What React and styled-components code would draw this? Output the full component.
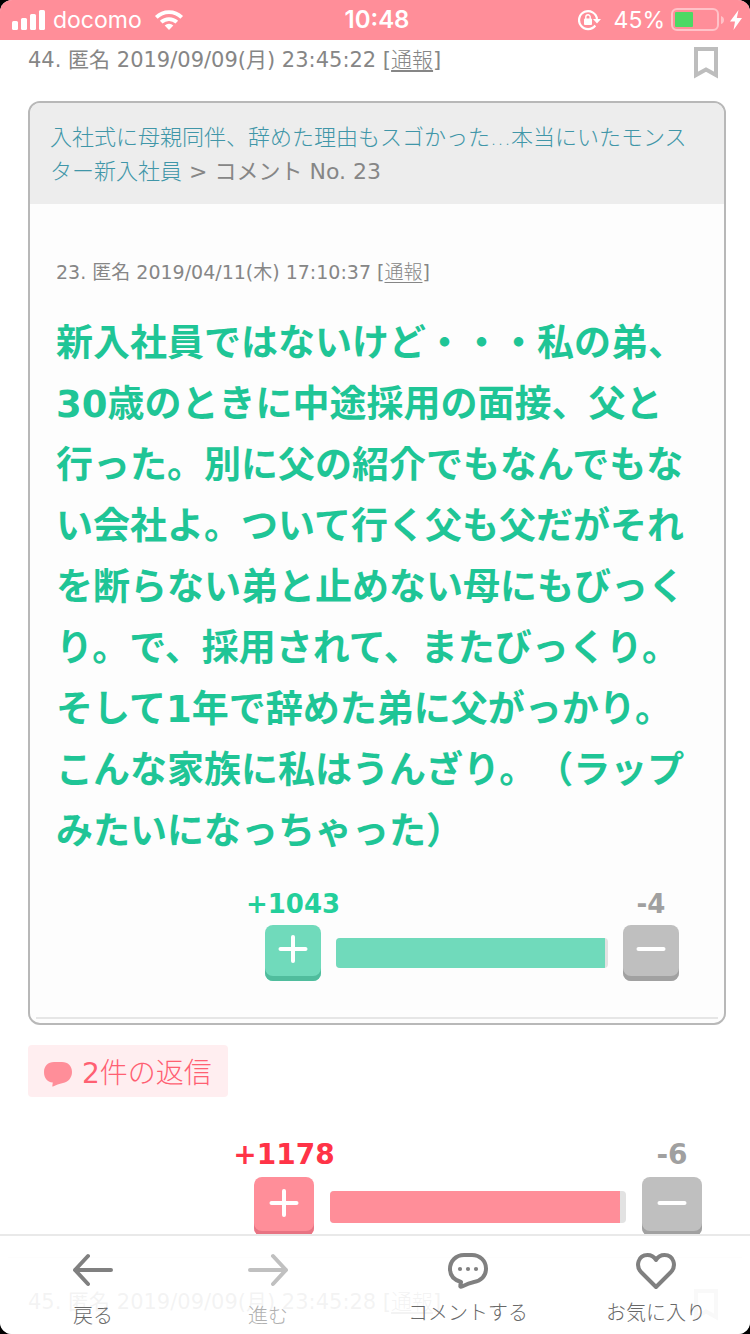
import styled, { createGlobalStyle } from 'styled-components';

const GlobalStyle = createGlobalStyle`
    * {
        box-sizing: border-box;
    }

    body {
        margin: 0;
        background: #000;
        font-family: 'DejaVu Sans', 'Noto Sans CJK JP', sans-serif;
        color: #868686;
    }

    button {
        border: none;
        padding: 0;
        font-family: inherit;
        cursor: pointer;
    }
`;

const Screen = styled.div`
    position: relative;
    height: 100vh;
    display: flex;
    flex-direction: column;
    overflow: hidden;
    border-radius: 12px;
    background: #fff;
`;

const StatusBar = styled.header`
    flex: none;
    height: 40px;
    padding: 0 8px 0 12px;
    display: grid;
    grid-template-columns: 1fr auto 1fr;
    align-items: center;
    background: #ff8e99;
    color: #fff;
    font-family: 'Inter', sans-serif;
    font-size: 23px;
    line-height: 40px;
`;

const StatusGroup = styled.div`
    display: flex;
    align-items: center;
    justify-content: ${props => props.justify};
    gap: ${props => props.gap};
`;

const Clock = styled.time`
    font-size: 24px;
    font-weight: 600;
`;

const Feed = styled.main`
    flex: 1;
    min-height: 0;
    overflow-y: auto;
    scrollbar-width: none;
    padding: 0 8px;
`;

const Post = styled.article`
    padding: 24px 16px 21px 20px;
    border-top: 1px solid #e6e6e6;

    &:first-child {
        padding-top: 0;
        border-top: none;
    }
`;

const PostHead = styled.div`
    display: flex;
    justify-content: space-between;
    align-items: flex-start;
    padding-right: 8px;
`;

const Meta = styled.p`
    margin: 0;
    font-size: ${props => props.$small ? '19px' : '21px'};
    line-height: ${props => props.$small ? '28px' : '40px'};
`;

const Report = styled.a`
    color: inherit;
    font-weight: 300;
    text-decoration: underline;
    text-underline-offset: 3px;
`;

const BookmarkButton = styled.button`
    display: flex;
    margin-top: 7px;
    background: none;
`;

const Quote = styled.section`
    margin-top: 21px;
    border: 2px solid #b8b8b8;
    border-radius: 12px;
    overflow: hidden;
    background: #fdfdfd;
`;

const QuoteHead = styled.p`
    margin: 0;
    padding: 18px 20px 15px;
    background: #ededed;
    font-size: 22px;
    line-height: 34px;
`;

const TopicLink = styled.a`
    color: #4096a8;
    font-weight: 300;
    text-decoration: none;
`;

const QuoteBody = styled.div`
    padding: 54px 26px 36px;
`;

const Comment = styled.p`
    margin: 27px 0 28px;
    color: #1fc596;
    font-size: 37px;
    font-weight: 700;
    line-height: 61px;
    text-spacing-trim: space-all;
`;

const QuoteRule = styled.hr`
    margin: 0 6px 4px;
    border: none;
    border-top: 2px solid #e6e6e6;
`;

const ReplyButton = styled.button`
    display: flex;
    align-items: center;
    gap: 8px;
    height: 52px;
    margin-top: 20px;
    padding: 6px 16px 0;
    border-radius: 4px;
    background: #ffeef0;
    color: #ff6072;
    font-size: 28px;
    font-weight: 300;
    line-height: 46px;
`;

const ReplyCount = styled.span`
    font-weight: 400;
`;

const Votes = styled.div`
    display: grid;
    grid-template-columns: ${props => props.$small ? '56px 1fr 56px' : '60px 1fr 60px'};
    gap: ${props => props.$small ? '7px 15px' : '6px 16px'};
    align-items: center;
    max-width: ${props => props.$small ? '414px' : '448px'};
    margin: ${props => props.$small ? '0 19px 0 auto' : '42px 24px 0 auto'};
    font-size: ${props => props.$small ? '26px' : '28px'};
    line-height: ${props => props.$small ? '28px' : '32px'};
`;

const Count = styled.span`
    grid-column: ${props => props.col};
    display: flex;
    justify-content: center;
    color: ${props => props.color};
    font-weight: 700;
    white-space: nowrap;
`;

const VoteButton = styled.button`
    display: flex;
    justify-content: center;
    align-items: center;
    height: ${props => props.$small ? '56px' : '59px'};
    padding-bottom: 6px;
    border-radius: 8px;
    background: ${props => props.$face};
    box-shadow: inset 0 -5px 0 ${props => props.$edge};
`;

const Track = styled.div`
    height: ${props => props.$small ? '30px' : '32px'};
    border-radius: 4px;
    overflow: hidden;
    background: #e2e2e2;
`;

const Fill = styled.div`
    height: 100%;
    background: ${props => props.color};
`;

const TabBar = styled.nav`
    position: absolute;
    left: 0;
    right: 0;
    bottom: 0;
    height: 100px;
    padding-right: 24px;
    display: grid;
    grid-template-columns: 186fr 164fr 236fr 140fr;
    border-top: 2px solid #e9e9e9;
    background: rgba(255, 255, 255, 0.9);
`;

const Tab = styled.button`
    display: flex;
    flex-direction: column;
    align-items: center;
    gap: ${props => props.gap};
    padding-top: 14px;
    background: none;
    color: ${props => props.disabled ? '#b0b0b0' : '#686868'};
    font-size: 20px;
    font-weight: 300;
    line-height: 24px;
    white-space: nowrap;

    svg {
        color: ${props => props.disabled ? '#c0c0c0' : '#808080'};
    }
`;

const themes = {
    pink: { text: '#ff3347', face: '#ff8e99', edge: '#e87483' },
    green: { text: '#24cf9b', face: '#70dabb', edge: '#50bd9d' },
};

function Sign({plus}) {
    return (
        <svg width="30" height="30" viewBox="0 0 30 30" stroke="#fff" strokeWidth="4" strokeLinecap="round" aria-hidden="true">
            <path d="M2.500 14h25" />
            {plus && <path d="M15 2v24" />}
        </svg>
    );
}

function VoteRow({up, down, percent, theme, small}) {
    const colors = themes[theme];

    return (
        <Votes $small={small}>
            <Count col={1} color={colors.text}>+{up}</Count>
            <Count col={3} color="#a0a0a0">-{down}</Count>
            <VoteButton $small={small} $face={colors.face} $edge={colors.edge} aria-label="プラス">
                <Sign plus />
            </VoteButton>
            <Track $small={small}>
                <Fill color={colors.face} style={{width: `${percent}%`}} />
            </Track>
            <VoteButton $small={small} $face="#bfbfbf" $edge="#a1a1a1" aria-label="マイナス">
                <Sign />
            </VoteButton>
        </Votes>
    );
}

function PostMeta({number, date, small}) {
    return (
        <Meta $small={small}>
            {number}. 匿名 {date} [<Report href="#report">通報</Report>]
        </Meta>
    );
}

function PostHeader({number, date}) {
    return (
        <PostHead>
            <PostMeta number={number} date={date} />
            <BookmarkButton aria-label="ブックマーク">
                <svg width="24" height="32" viewBox="0 0 24 32" fill="none" stroke="#bdbdbd" strokeWidth="4">
                    <path d="M2 2h20v26l-10-5.500-10 5.500z" />
                </svg>
            </BookmarkButton>
        </PostHead>
    );
}

function Status() {
    return (
        <StatusBar>
            <StatusGroup justify="flex-start" gap="8px">
                <svg width="33" height="20" viewBox="0 0 33 20" fill="#fff">
                    <rect x="0" y="11" width="6" height="9" rx="1.500" />
                    <rect x="9" y="8" width="6" height="12" rx="1.500" />
                    <rect x="18" y="4" width="6" height="16" rx="1.500" />
                    <rect x="27" y="0" width="6" height="20" rx="1.500" />
                </svg>
                <span>docomo</span>
                <svg width="36" height="20" viewBox="-5 0 36 20">
                    <g fill="none" stroke="#fff" strokeWidth="3.800">
                        <path d="M1.300 7.300a18 18 0 0 1 25.400 0" />
                        <path d="M6.200 12.200a11.200 11.200 0 0 1 15.600 0" />
                    </g>
                    <path d="M14 20l-4.300-4.500a6.200 6.200 0 0 1 8.600 0z" fill="#fff" />
                </svg>
            </StatusGroup>
            <Clock>10:48</Clock>
            <StatusGroup justify="flex-end" gap="6px">
                <svg width="30" height="22" viewBox="0 0 30 22">
                    <path d="M17.300 16.500A9 9 0 1 1 19 10" fill="none" stroke="#fff" strokeWidth="2.200" />
                    <path d="M15 10h8l-4 4.500z" fill="#fff" />
                    <rect x="6" y="9.500" width="8" height="6.500" rx="1" fill="#fff" />
                    <path d="M7.800 10V8a2.200 2.200 0 0 1 4.400 0v2" fill="none" stroke="#fff" strokeWidth="1.400" />
                </svg>
                <span>45%</span>
                <svg width="53" height="24" viewBox="0 0 53 24">
                    <rect x="1" y="1" width="46" height="21" rx="5" fill="none" stroke="#ffc2c8" strokeWidth="2" />
                    <path d="M50 8q3 1 3 4t-3 4z" fill="#ffc2c8" />
                    <rect x="4" y="4" width="18" height="15" rx="1" fill="#4cd964" />
                </svg>
                <svg width="12" height="20" viewBox="0 0 12 20" fill="#fff">
                    <path d="M8.500 0L0 11.500h5L3.500 20 12 8H6.800z" />
                </svg>
            </StatusGroup>
        </StatusBar>
    );
}

function Tabs() {
    const line = {fill: 'none', stroke: 'currentColor', strokeWidth: 4, strokeLinecap: 'round', strokeLinejoin: 'round'};

    return (
        <TabBar>
            <Tab gap="14px">
                <svg width="42" height="40" viewBox="0 0 42 40" {...line}>
                    <path d="M39 20H3M16 6L3 20l13 14" />
                </svg>
                戻る
            </Tab>
            <Tab gap="14px" disabled>
                <svg width="42" height="40" viewBox="0 0 42 40" {...line}>
                    <path d="M3 20h36M26 6l13 14-13 14" />
                </svg>
                進む
            </Tab>
            <Tab gap="11px">
                <svg width="42" height="40" viewBox="0 0 42 40" {...line}>
                    <path d="M17 5h8c8 0 14 6 14 13.500S34 31 27 32c-5 1-9 3-12 4.500-1 .500-2 .200-1.700-1l.700-3.500C7 30 3 26 3 19 3 11 9 5 17 5z" />
                    <g fill="currentColor" stroke="none">
                        <circle cx="13" cy="19" r="2.100" />
                        <circle cx="21" cy="19" r="2.100" />
                        <circle cx="29" cy="19" r="2.100" />
                    </g>
                </svg>
                コメントする
            </Tab>
            <Tab gap="11px">
                <svg width="42" height="40" viewBox="0 0 42 40" {...line}>
                    <path d="M21 37L6 22C0.500 16 3 5 12.500 5c4 0 6.500 1.700 8.500 5 2-3.300 4.500-5 8.500-5C39 5 41.500 16 36 22z" />
                </svg>
                お気に入り
            </Tab>
        </TabBar>
    );
}

export default function App() {
    return (
        <>
            <GlobalStyle />
            <Screen>
                <Status />
                <Feed>
                    <Post>
                        <PostHeader number={44} date="2019/09/09(月) 23:45:22" />
                        <Quote>
                            <QuoteHead>
                                <TopicLink href="#topic">入社式に母親同伴、辞めた理由もスゴかった...本当にいたモンスター新入社員</TopicLink> &gt; コメント No. 23
                            </QuoteHead>
                            <QuoteBody>
                                <PostMeta number={23} date="2019/04/11(木) 17:10:37" small />
                                <Comment>
                                    新入社員ではないけど・・・私の弟、30歳のときに中途採用の面接、父と行った。別に父の紹介でもなんでもない会社よ。ついて行く父も父だがそれを断らない弟と止めない母にもびっくり。で、採用されて、またびっくり。そして1年で辞めた弟に父がっかり。こんな家族に私はうんざり。（ラップみたいになっちゃった）
                                </Comment>
                                <VoteRow up={1043} down={4} percent={99} theme="green" small />
                            </QuoteBody>
                            <QuoteRule />
                        </Quote>
                        <ReplyButton>
                            <svg width="30" height="26" viewBox="0 0 30 26" fill="#ff8e99">
                                <path d="M10 1h8c6 0 10 4 10 10s-4 10-9 11c-4 .800-7 2-10 3.500-.400.200-.800 0-.700-.500L8.800 21.500C3 21 0 17 0 11 0 5 4 1 10 1z" />
                            </svg>
                            <span><ReplyCount>2</ReplyCount>件の返信</span>
                        </ReplyButton>
                        <VoteRow up={1178} down={6} percent={98} theme="pink" />
                    </Post>
                    <Post>
                        <PostHeader number={45} date="2019/09/09(月) 23:45:28" />
                    </Post>
                </Feed>
                <Tabs />
            </Screen>
        </>
    );
}
